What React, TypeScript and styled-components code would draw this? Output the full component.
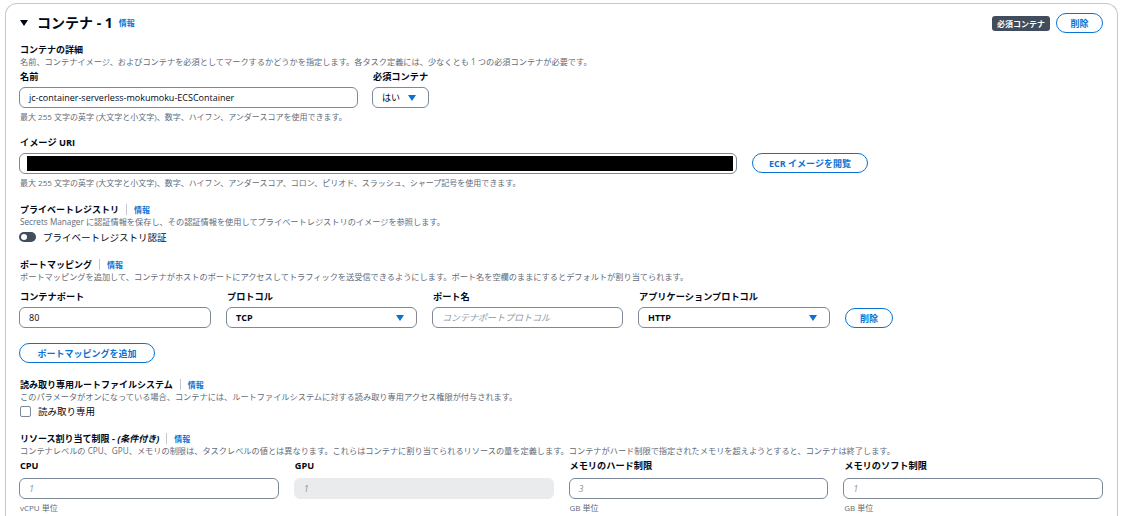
import React from 'react';
import styled, { createGlobalStyle } from 'styled-components';

const GlobalStyle = createGlobalStyle`
  html, body {
    margin: 0;
    padding: 0;
    background: #ffffff;
    overflow: hidden;
  }
  body {
    font-family: "Open Sans", "Noto Sans CJK JP", sans-serif;
    color: #000716;
  }
`;

const Card = styled.div`
  margin: 3px 3px 0 5px;
  height: 560px;
  border: 1px solid #c6c6cd;
  border-bottom: none;
  border-radius: 12px 12px 0 0;
  padding: 0 14px 0 13px;
`;

const Header = styled.div`
  display: flex;
  align-items: center;
  height: 26px;
  padding-top: 6px;
`;

const Title = styled.h2`
  margin: 0;
  display: flex;
  align-items: center;
  font-size: 14px;
  font-weight: 700;
  line-height: 18px;
`;

const Caret = styled.svg`
  width: 8px;
  height: 6px;
  margin: 0 9px 0 1px;
`;

const Info = styled.a`
  color: #0972d3;
  font-size: 8px;
  font-weight: 700;
  margin-left: 6px;
  text-decoration: none;
`;

const Divider = styled.span`
  display: inline-block;
  width: 1px;
  height: 11px;
  background: #c6c6cd;
  margin: 0 1px 0 7px;
`;

const Actions = styled.div`
  margin-left: auto;
  display: flex;
  align-items: center;
  gap: 6px;
`;

const Badge = styled.span`
  background: #414d5c;
  color: #fff;
  font-size: 8px;
  font-weight: 700;
  border-radius: 3px;
  padding: 2px 5px;
  line-height: 11px;
`;

const PillButton = styled.button<{ $w?: number }>`
  box-sizing: border-box;
  height: 20px;
  width: ${p => (p.$w ? `${p.$w}px` : 'auto')};
  padding: 0 12px;
  border: 1.5px solid #0972d3;
  border-radius: 12px;
  background: #fff;
  color: #0972d3;
  font-family: inherit;
  font-size: 9px;
  font-weight: 700;
  white-space: nowrap;
`;

const Section = styled.div<{ $mt: number }>`
  margin-top: ${p => p.$mt}px;
`;

const Heading = styled.div`
  display: flex;
  align-items: center;
  font-size: 9px;
  font-weight: 700;
  line-height: 13px;
  height: 13px;
  padding-left: 1px;
`;

const Desc = styled.div`
  font-size: 8.2px;
  color: #5f6b7a;
  line-height: 11px;
  height: 11px;
  padding-left: 1px;
  white-space: nowrap;
`;

const Label = styled.div<{ $mt?: number }>`
  font-size: 9.2px;
  font-weight: 700;
  line-height: 13px;
  height: 13px;
  margin-top: ${p => p.$mt ?? 0}px;
  padding-left: 1px;
  white-space: nowrap;
`;

const Field = styled.div<{ $w?: number }>`
  display: flex;
  flex-direction: column;
  width: ${p => (p.$w ? `${p.$w}px` : 'auto')};
`;

const InputBox = styled.div<{ $gap?: number; $disabled?: boolean; $placeholder?: boolean }>`
  box-sizing: border-box;
  margin-top: ${p => p.$gap ?? 4}px;
  height: 21px;
  border: 1px solid ${p => (p.$disabled ? '#e9ebed' : '#7d8998')};
  background: ${p => (p.$disabled ? '#e9ebed' : '#fff')};
  border-radius: 6px;
  display: flex;
  align-items: center;
  padding: 0 9px;
  font-size: 9px;
  color: ${p => (p.$placeholder ? '#8d99a8' : '#000716')};
  font-style: ${p => (p.$placeholder ? 'italic' : 'normal')};
  white-space: nowrap;
`;

const Redacted = styled.div`
  flex: 1;
  height: 15px;
  background: #000;
  margin: 0 -3px 0 -2px;
`;

const SelectBox = styled(InputBox)<{ $plain?: boolean }>`
  justify-content: space-between;
  font-weight: ${p => (p.$plain ? 400 : 700)};
`;

const Arrow = styled.svg`
  width: 8px;
  height: 6px;
  margin-right: 3px;
`;

const Hint = styled.div<{ $mt?: number }>`
  font-size: 8px;
  color: #5f6b7a;
  line-height: 11px;
  margin-top: ${p => p.$mt ?? 3}px;
  padding-left: 1px;
  white-space: nowrap;
`;

const Row = styled.div<{ $gap: number }>`
  display: flex;
  align-items: flex-start;
  gap: ${p => p.$gap}px;
`;

const PortGrid = styled.div`
  display: grid;
  grid-template-columns: 192px 191px 191px 192px auto;
  column-gap: 15px;
  align-items: end;
  margin-top: 8px;
`;

const ResourceGrid = styled.div`
  display: grid;
  grid-template-columns: repeat(4, 1fr);
  column-gap: 15px;
  margin-top: 3px;
`;

const ToggleRow = styled.div`
  display: flex;
  align-items: center;
  gap: 7px;
  height: 12px;
  margin-top: 4px;
  font-size: 9.5px;
`;

const Toggle = styled.span`
  position: relative;
  width: 17px;
  height: 10px;
  border-radius: 5px;
  background: #414d5c;
  &::after {
    content: '';
    position: absolute;
    left: 2px;
    top: 2px;
    width: 6px;
    height: 6px;
    border-radius: 50%;
    background: #fff;
  }
`;

const Check = styled.span`
  box-sizing: border-box;
  width: 11px;
  height: 11px;
  border: 1px solid #7d8998;
  border-radius: 2px;
  margin-left: 1px;
`;

const HeadingWithInfo = ({ children }: { children: React.ReactNode }) => (
  <Heading>
    {children}
    <Divider />
    <Info>情報</Info>
  </Heading>
);

const DownArrow = () => (
  <Arrow viewBox="0 0 8 6">
    <polygon points="0,0 8,0 4,6" fill="#0972d3" />
  </Arrow>
);

export default function App() {
  return (
    <>
      <GlobalStyle />
      <Card>
        <Header>
          <Title>
            <Caret viewBox="0 0 8 6">
              <polygon points="0,0 8,0 4,6" fill="#000716" />
            </Caret>
            コンテナ - 1<Info>情報</Info>
          </Title>
          <Actions>
            <Badge>必須コンテナ</Badge>
            <PillButton $w={47}>削除</PillButton>
          </Actions>
        </Header>

        <Section $mt={7}>
          <Heading>コンテナの詳細</Heading>
          <Desc>名前、コンテナイメージ、およびコンテナを必須としてマークするかどうかを指定します。各タスク定義には、少なくとも 1 つの必須コンテナが必要です。</Desc>
          <Row $gap={14}>
            <Field $w={339}>
              <Label $mt={3}>名前</Label>
              <InputBox $gap={4}>jc-container-serverless-mokumoku-ECSContainer</InputBox>
              <Hint>最大 255 文字の英字 (大文字と小文字)、数字、ハイフン、アンダースコアを使用できます。</Hint>
            </Field>
            <Field $w={57}>
              <Label $mt={3}>必須コンテナ</Label>
              <SelectBox $gap={4} $plain>
                はい
                <DownArrow />
              </SelectBox>
            </Field>
          </Row>
        </Section>

        <Section $mt={14}>
          <Label>イメージ URI</Label>
          <Row $gap={15}>
            <Field $w={718}>
              <InputBox $gap={4} style={{ padding: '0 6px 0 9px' }}>
                <Redacted />
              </InputBox>
            </Field>
            <PillButton $w={116} style={{ marginTop: 4 }}>ECR イメージを閲覧</PillButton>
          </Row>
          <Hint>最大 255 文字の英字 (大文字と小文字)、数字、ハイフン、アンダースコア、コロン、ピリオド、スラッシュ、シャープ記号を使用できます。</Hint>
        </Section>

        <Section $mt={15}>
          <HeadingWithInfo>プライベートレジストリ</HeadingWithInfo>
          <Desc>Secrets Manager に認証情報を保存し、その認証情報を使用してプライベートレジストリのイメージを参照します。</Desc>
          <ToggleRow>
            <Toggle />
            プライベートレジストリ認証
          </ToggleRow>
        </Section>

        <Section $mt={15}>
          <HeadingWithInfo>ポートマッピング</HeadingWithInfo>
          <Desc>ポートマッピングを追加して、コンテナがホストのポートにアクセスしてトラフィックを送受信できるようにします。ポート名を空欄のままにするとデフォルトが割り当てられます。</Desc>
          <PortGrid>
            <Field>
              <Label>コンテナポート</Label>
              <InputBox $gap={4}>80</InputBox>
            </Field>
            <Field>
              <Label>プロトコル</Label>
              <SelectBox $gap={4}>
                TCP
                <DownArrow />
              </SelectBox>
            </Field>
            <Field>
              <Label>ポート名</Label>
              <InputBox $gap={4} $placeholder>コンテナポートプロトコル</InputBox>
            </Field>
            <Field>
              <Label>アプリケーションプロトコル</Label>
              <SelectBox $gap={4}>
                HTTP
                <DownArrow />
              </SelectBox>
            </Field>
            <PillButton $w={48}>削除</PillButton>
          </PortGrid>
          <PillButton $w={136} style={{ marginTop: 15 }}>ポートマッピングを追加</PillButton>
        </Section>

        <Section $mt={15}>
          <HeadingWithInfo>読み取り専用ルートファイルシステム</HeadingWithInfo>
          <Desc>このパラメータがオンになっている場合、コンテナには、ルートファイルシステムに対する読み取り専用アクセス権限が付与されます。</Desc>
          <ToggleRow style={{ marginTop: 3 }}>
            <Check />
            読み取り専用
          </ToggleRow>
        </Section>

        <Section $mt={15}>
          <HeadingWithInfo>
            リソース割り当て制限 -&nbsp;<i>(条件付き)</i>
          </HeadingWithInfo>
          <Desc>コンテナレベルの CPU、GPU、メモリの制限は、タスクレベルの値とは異なります。これらはコンテナに割り当てられるリソースの量を定義します。コンテナがハード制限で指定されたメモリを超えようとすると、コンテナは終了します。</Desc>
          <ResourceGrid>
            <Field>
              <Label>CPU</Label>
              <InputBox $gap={6} $placeholder>1</InputBox>
              <Hint>vCPU 単位</Hint>
            </Field>
            <Field>
              <Label>GPU</Label>
              <InputBox $gap={6} $placeholder $disabled>1</InputBox>
            </Field>
            <Field>
              <Label>メモリのハード制限</Label>
              <InputBox $gap={6} $placeholder>3</InputBox>
              <Hint>GB 単位</Hint>
            </Field>
            <Field>
              <Label>メモリのソフト制限</Label>
              <InputBox $gap={6} $placeholder>1</InputBox>
              <Hint>GB 単位</Hint>
            </Field>
          </ResourceGrid>
        </Section>
      </Card>
    </>
  );
}
